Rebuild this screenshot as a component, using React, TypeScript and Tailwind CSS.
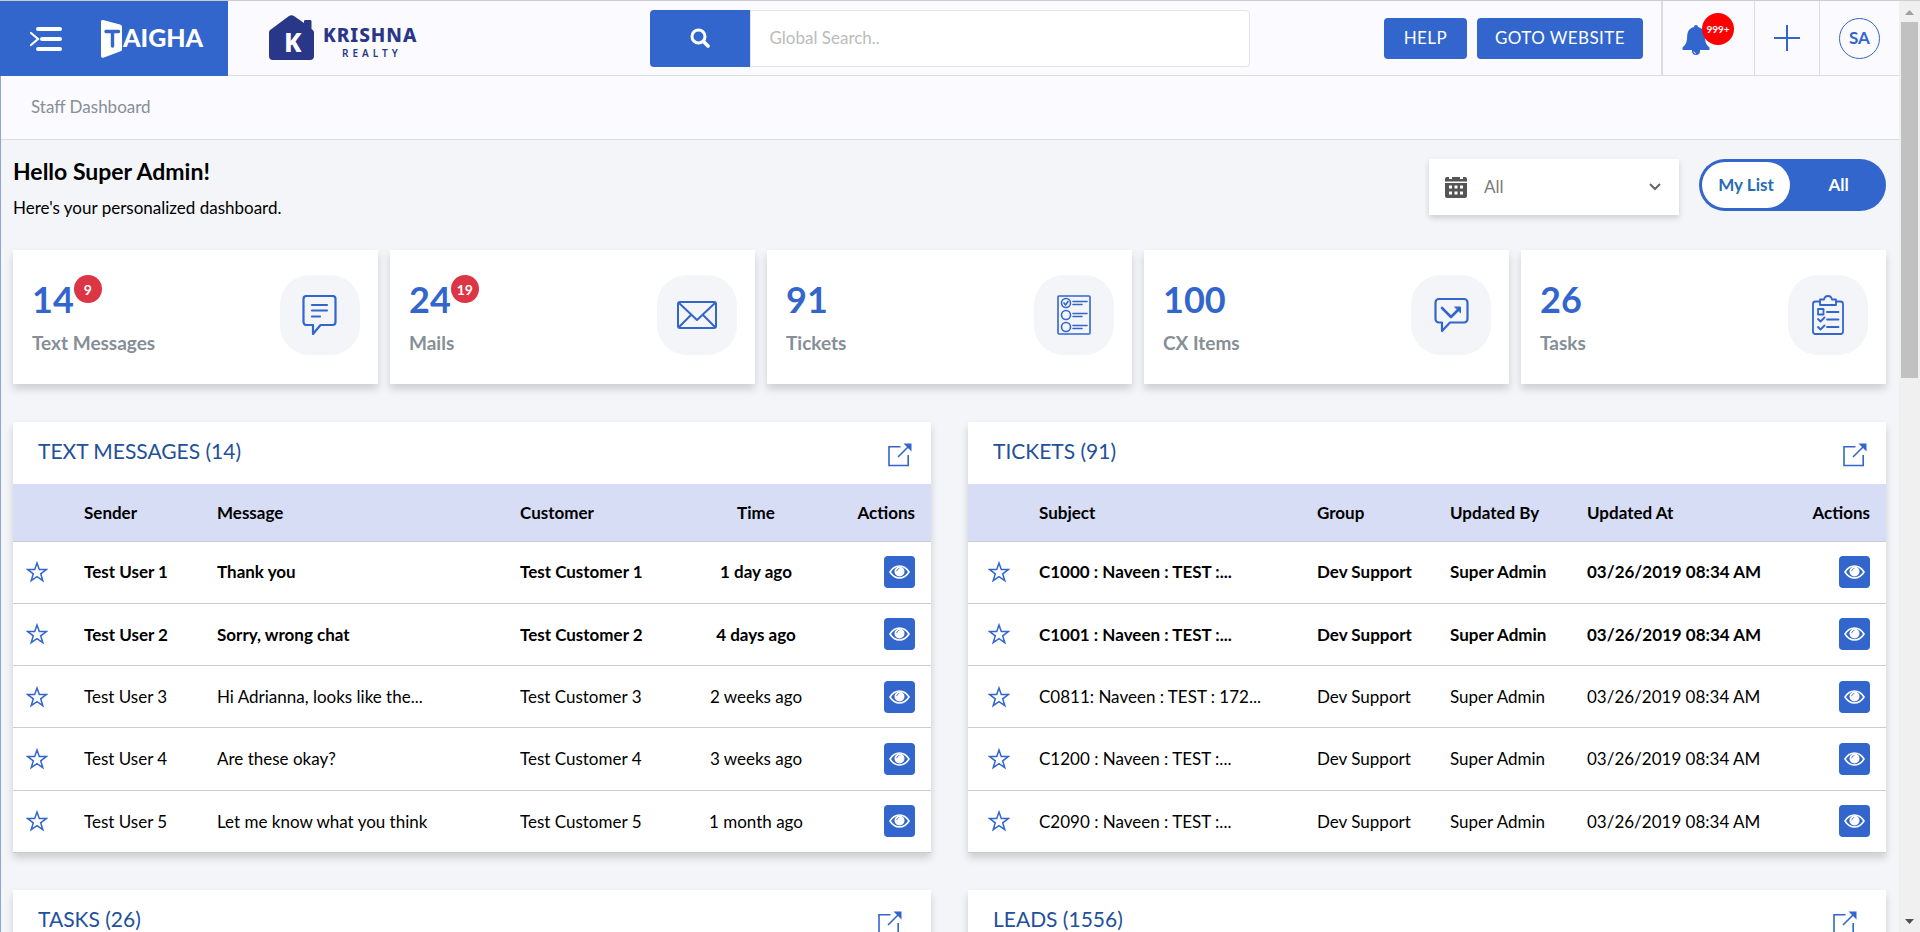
import { ReactNode } from "react";
import clsx from "clsx";

interface IStat {
  label: string;
  value: number;
  badge?: number;
  icon: ReactNode;
}

interface IColumn {
  title: string;
  width: string;
  align?: string;
}

interface IRow {
  unread: boolean;
  cells: string[];
}

interface PanelProps {
  title: string;
  columns?: IColumn[];
  rows?: IRow[];
  iconEdge?: string;
  starPadding?: string;
}

const stroke = {
  fill: "none",
  stroke: "currentColor",
  strokeWidth: 2,
  strokeLinejoin: "round" as const,
  strokeLinecap: "round" as const,
};

function MessageIcon() {
  return (
    <svg width="40" height="40" viewBox="0 0 40 40" {...stroke} strokeWidth={2.2}>
      <path d="M6.500 1h26a3 3 0 0 1 3 3v23a3 3 0 0 1-3 3H20.500l-7.500 9v-9H6.500a3 3 0 0 1-3-3V4a3 3 0 0 1 3-3z" />
      <path d="M12 10h15M12 15.500h15M12 21.500h8" />
    </svg>
  );
}

function MailIcon() {
  return (
    <svg width="40" height="40" viewBox="0 0 40 40" {...stroke}>
      <rect x="1" y="7" width="38" height="26" rx="2" />
      <path d="M2 8l18 17L38 8M2 32l12-12M38 32L26 20" />
    </svg>
  );
}

function TicketIcon() {
  return (
    <svg width="40" height="40" viewBox="0 0 40 40" {...stroke} strokeWidth={1.6}>
      <rect x="4" y="1" width="32" height="38" rx="1" />
      <circle cx="12" cy="8" r="4.500" />
      <circle cx="12" cy="20" r="4.500" />
      <circle cx="12" cy="32" r="4.500" />
      <path d="M10 8l1.500 2L14 6.500M19 6.500h14M19 9.500h9M19 18.500h14M19 21.500h9M19 30.500h14M19 33.500h9" />
    </svg>
  );
}

function CxIcon() {
  return (
    <svg width="40" height="40" viewBox="0 0 40 40" {...stroke} strokeWidth={2.2}>
      <path d="M8 4h25a3.500 3.500 0 0 1 3.500 3.500V24a3.500 3.500 0 0 1-3.500 3.500H19L11 36v-8.500H8A3.500 3.500 0 0 1 4.500 24V7.500A3.500 3.500 0 0 1 8 4z" />
      <path d="M11 13l9 9 8-8" strokeWidth={2.6} />
      <path d="M24 12h5.500v5.500z" fill="currentColor" strokeWidth={1} />
    </svg>
  );
}

function TaskIcon() {
  return (
    <svg width="40" height="40" viewBox="0 0 40 40" {...stroke} strokeWidth={1.8}>
      <path d="M12 6.500H7.500a2.500 2.500 0 0 0-2.500 2.500v27.500A2.500 2.500 0 0 0 7.500 39h25a2.500 2.500 0 0 0 2.500-2.500V9a2.500 2.500 0 0 0-2.500-2.500H28" />
      <path d="M12 10V4.500h4C16.500 2 18 1 20 1s3.500 1 4 3.500h4V10z" />
      <path d="M10 14h5.500v5.500H10zM19 17h11.500M19 24.500h11.500M19 32h11.500M10 24l2.500 2.500 4-4M10 32l2.500 2.500 4-4" />
    </svg>
  );
}

function ExternalIcon() {
  return (
    <svg width="24" height="24" viewBox="0 0 24 24" fill="none" stroke="currentColor" strokeWidth="1.600">
      <path d="M12.500 3.800H1v18.700h19.200V12" />
      <path d="M10 14L22 2" />
      <path d="M15.500 0.500H23.500v8z" fill="currentColor" stroke="none" />
    </svg>
  );
}

function StarIcon() {
  return (
    <svg width="22" height="22" viewBox="0 0 22 22" fill="none" stroke="currentColor" strokeWidth="1.500">
      <path d="M11 2l2.300 6.500h7l-5.600 4.300 2.100 6.900L11 15.700l-5.800 4 2.100-6.900L1.700 8.500h7z" />
    </svg>
  );
}

function EyeIcon() {
  return (
    <svg width="21" height="14" viewBox="0 0 21 14" fill="none">
      <path d="M1 7C3.500 3 6.700 1 10.500 1S17.500 3 20 7c-2.500 4-5.700 6-9.500 6S3.500 11 1 7z" stroke="white" strokeWidth="1.600" />
      <circle cx="10.500" cy="6.500" r="5" fill="white" />
      <path d="M7.800 6.200c0-1.500 1-2.600 2.500-2.700" stroke="#3266cc" strokeWidth="0.900" />
    </svg>
  );
}

function MenuIcon() {
  return (
    <svg width="34" height="26" viewBox="0 0 34 26" fill="none" stroke="white" strokeLinecap="round">
      <path d="M9 3h22M13 13h18M9 23h22" strokeWidth="4" />
      <path d="M2 7l7 6-7 6" strokeWidth="2.200" />
    </svg>
  );
}

function BellIcon() {
  return (
    <svg width="28" height="32" viewBox="0 0 28 32" fill="#3266cc">
      <path d="M14 1c1.200 0 2 .8 2 2 4.500 1 6.500 4.300 6.800 9 .3 5.500 1 8.500 4.700 11.500v2.500H.5v-2.500C4.200 20.500 5 17.500 5.200 12c.3-4.700 2.300-8 6.800-9 0-1.200.8-2 2-2z" />
      <path d="M10 26h8v1a4 4 0 0 1-8 0z" />
      <path d="M11.800 27.500a2.200 2.200 0 0 0 2 2" fill="none" stroke="white" strokeWidth="0.900" />
    </svg>
  );
}

function CalendarIcon() {
  return (
    <svg width="22" height="22" viewBox="0 0 22 22">
      <path fill="#555" d="M2 1h2v2h3V1h8v2h3V1h2a2 2 0 0 1 2 2v2.500H0V3a2 2 0 0 1 2-2zM0 7h22v13a2 2 0 0 1-2 2H2a2 2 0 0 1-2-2z" />
      <path fill="white" d="M4 9.500h3v3H4zM9.500 9.500h3v3h-3zM15 9.500h3v3h-3zM4 15.500h3v3H4zM9.500 15.500h3v3h-3zM15 15.500h3v3h-3z" />
    </svg>
  );
}

function TaighaLogo() {
  return (
    <svg width="108" height="40" viewBox="0 0 108 40" role="img" aria-label="Taigha">
      <path fill="white" d="M3 1l17 4.500c1.500.5 2 1 2 2.500v22c0 1.500-.5 2-2 2.500L4 38.500C2 39 1 38.500 1 37V3c0-1.500.5-2.300 2-2z" />
      <path fill="none" stroke="#3266cc" strokeWidth="3.400" strokeLinecap="round" d="M6 12.500h12.500M12.500 13v14" />
      <text x="23" y="28" fill="white" className="font-[Lato] text-[25px] font-black">
        AIGHA
      </text>
    </svg>
  );
}

function KrishnaLogo() {
  return (
    <svg width="152" height="46" viewBox="0 0 152 46" role="img" aria-label="Krishna Realty" fill="#293789">
      <path d="M20 1c1.500-1 3.500-1 5 0l10 7V6.500C35 5.500 35.500 5 36.500 5h4.500c1 0 1.500.5 1.500 1.500V14l1 .8c1.200 1 1.500 1.800 1.500 3.200v23a4 4 0 0 1-4 4H4a4 4 0 0 1-4-4V18c0-1.500.5-2.500 1.500-3.200z" />
      <text x="15" y="37" fill="white" className="font-['Noto_Sans'] text-[26px] font-extrabold">
        K
      </text>
      <text x="54" y="27" className="font-['Noto_Sans'] text-[19px] font-extrabold tracking-wider">
        KRISHNA
      </text>
      <text x="73" y="42" className="font-['Noto_Sans'] text-[10px] font-semibold tracking-[4px]">
        REALTY
      </text>
    </svg>
  );
}

const stats: IStat[] = [
  { label: "Text Messages", value: 14, badge: 9, icon: <MessageIcon /> },
  { label: "Mails", value: 24, badge: 19, icon: <MailIcon /> },
  { label: "Tickets", value: 91, icon: <TicketIcon /> },
  { label: "CX Items", value: 100, icon: <CxIcon /> },
  { label: "Tasks", value: 26, icon: <TaskIcon /> },
];

const messageColumns: IColumn[] = [
  { title: "Sender", width: "w-[133px]" },
  { title: "Message", width: "" },
  { title: "Customer", width: "w-[160px]" },
  { title: "Time", width: "w-[152px]", align: "text-center" },
];

const messages: IRow[] = [
  { unread: true, cells: ["Test User 1", "Thank you", "Test Customer 1", "1 day ago"] },
  { unread: true, cells: ["Test User 2", "Sorry, wrong chat", "Test Customer 2", "4 days ago"] },
  { unread: false, cells: ["Test User 3", "Hi Adrianna, looks like the...", "Test Customer 3", "2 weeks ago"] },
  { unread: false, cells: ["Test User 4", "Are these okay?", "Test Customer 4", "3 weeks ago"] },
  { unread: false, cells: ["Test User 5", "Let me know what you think", "Test Customer 5", "1 month ago"] },
];

const ticketColumns: IColumn[] = [
  { title: "Subject", width: "" },
  { title: "Group", width: "w-[133px]" },
  { title: "Updated By", width: "w-[137px]" },
  { title: "Updated At", width: "w-[200px]" },
];

const tickets: IRow[] = [
  { unread: true, cells: ["C1000 : Naveen : TEST :...", "Dev Support", "Super Admin", "03/26/2019 08:34 AM"] },
  { unread: true, cells: ["C1001 : Naveen : TEST :...", "Dev Support", "Super Admin", "03/26/2019 08:34 AM"] },
  { unread: false, cells: ["C0811: Naveen : TEST : 172...", "Dev Support", "Super Admin", "03/26/2019 08:34 AM"] },
  { unread: false, cells: ["C1200 : Naveen : TEST :...", "Dev Support", "Super Admin", "03/26/2019 08:34 AM"] },
  { unread: false, cells: ["C2090 : Naveen : TEST :...", "Dev Support", "Super Admin", "03/26/2019 08:34 AM"] },
];

function StatCard({ stat }: { stat: IStat }) {
  return (
    <div className="flex h-[134px] items-start justify-between bg-white pt-[25px] pr-[18px] pl-[19px] shadow-[0_5px_8px_rgba(0,0,0,0.16)]">
      <div>
        <div className="flex items-start">
          <span className="text-[36px] leading-[48px] font-bold text-[#3266cc]">{stat.value}</span>
          {stat.badge && (
            <span className="flex h-7 min-w-7 items-center justify-center rounded-full bg-[#dc3545] px-1 text-[14px] font-bold text-white">
              {stat.badge}
            </span>
          )}
        </div>
        <p className="text-[19px] leading-[40px] font-bold text-[#868e96]">{stat.label}</p>
      </div>
      <div className="flex h-20 w-20 items-center justify-center rounded-[30px] bg-[#f3f5f9] text-[#3266cc]">
        {stat.icon}
      </div>
    </div>
  );
}

function Panel({ title, columns, rows = [], iconEdge = "pr-[19px]", starPadding = "pl-[13px]" }: PanelProps) {
  return (
    <section className="min-w-0 bg-white shadow-[0_5px_8px_rgba(0,0,0,0.16)]">
      <div className={clsx("flex h-[62px] items-center justify-between pl-[25px]", iconEdge)}>
        <h2 className="pb-1 text-[21px] leading-6 text-[#23509b]">{title}</h2>
        <a href="#" aria-label={`Open ${title}`} className="pt-1 text-[#3266cc]">
          <ExternalIcon />
        </a>
      </div>
      {columns && (
        <table className="h-[369px] w-full table-fixed text-left">
          <thead className="bg-[#d6ddf5]">
            <tr className="h-[57px] border-b border-[#ccc]">
              <th className="w-[71px]"></th>
              {columns.map((column) => (
                <th key={column.title} className={clsx("font-bold", column.width, column.align)}>
                  {column.title}
                </th>
              ))}
              <th className="w-[99px] pr-4 text-right font-bold">Actions</th>
            </tr>
          </thead>
          <tbody>
            {rows.map((row) => (
              <tr key={row.cells[0]} className={clsx("border-b border-[#ccc]", row.unread && "font-bold")}>
                <td className={starPadding}>
                  <button type="button" aria-label="Star" className="block text-[#3266cc]">
                    <StarIcon />
                  </button>
                </td>
                {row.cells.map((cell, i) => (
                  <td key={i} className={clsx("truncate", columns[i].align)}>
                    {cell}
                  </td>
                ))}
                <td className="pr-4">
                  <button
                    type="button"
                    aria-label="View"
                    className="ml-auto flex h-8 w-[31px] items-center justify-center rounded bg-[#3266cc]"
                  >
                    <EyeIcon />
                  </button>
                </td>
              </tr>
            ))}
          </tbody>
        </table>
      )}
      {!columns && <div className="h-[369px]" />}
    </section>
  );
}

function Header() {
  return (
    <header className="flex h-[76px] items-stretch border-t border-[#ccc] bg-[#fbfaff]">
      <div className="flex w-[228px] items-center bg-[#3266cc] pl-[29px]">
        <button type="button" aria-label="Toggle menu">
          <MenuIcon />
        </button>
        <a href="#" className="ml-[37px]">
          <TaighaLogo />
        </a>
      </div>
      <div className="flex flex-1 items-stretch border-b border-[#dcdde2]">
        <a href="#" className="self-center pl-[41px]">
          <KrishnaLogo />
        </a>
        <div className="flex flex-1 items-center justify-center pl-24">
          <form className="flex h-[57px] w-[600px]">
            <button type="button" aria-label="Search" className="flex w-[100px] items-center justify-center rounded-l bg-[#3266cc]">
              <svg width="20" height="20" viewBox="0 0 20 20" fill="none" stroke="white" strokeLinecap="round">
                <circle cx="8.500" cy="8.500" r="6.500" strokeWidth="3" />
                <path d="M13.500 13.500l4.500 4.500" strokeWidth="3.600" />
              </svg>
            </button>
            <input
              type="text"
              aria-label="Global Search"
              placeholder="Global Search.."
              className="min-w-0 flex-1 rounded-r border border-[#e4e4e8] bg-white px-[18px] placeholder:text-[#bbb]"
            />
          </form>
        </div>
        <div className="flex items-center gap-[10px] pr-[18px] tracking-wide text-white">
          <button type="button" className="h-[41px] min-w-[83px] rounded bg-[#3266cc] px-[18px]">
            HELP
          </button>
          <button type="button" className="h-[41px] rounded bg-[#3266cc] px-[18px]">
            GOTO WEBSITE
          </button>
        </div>
        <div className="flex w-[93px] items-center border-l-2 border-[#dcdde2] pl-[19px]">
          <button type="button" aria-label="Notifications" className="relative pt-1">
            <BellIcon />
            <span className="absolute -top-[7px] left-5 flex h-8 w-8 items-center justify-center rounded-full bg-[#f00] text-[10px] font-bold text-white">
              999+
            </span>
          </button>
        </div>
        <button type="button" aria-label="Add" className="flex w-[65px] items-center justify-center border-l border-[#dcdde2]">
          <svg width="26" height="26" viewBox="0 0 26 26" stroke="#3266cc" strokeWidth="2">
            <path d="M13 0v26M0 13h26" />
          </svg>
        </button>
        <div className="flex w-20 items-center justify-center border-l border-[#dcdde2]">
          <button type="button" className="h-[41px] w-[41px] rounded-full border border-[#3266cc] text-[17px] font-bold text-[#3266cc]">
            SA
          </button>
        </div>
      </div>
    </header>
  );
}

function Scrollbar() {
  return (
    <div aria-hidden="true" className="flex w-[21px] shrink-0 flex-col items-center border-t border-[#ccc] bg-[#f0f0f0]">
      <svg width="21" height="21" viewBox="0 0 21 21" className="shrink-0">
        <path d="M6 14l4.500-5 4.500 5z" fill="#a0a0a0" />
      </svg>
      <div className="h-[356px] w-[17px] shrink-0 bg-[#c1c1c1]" />
      <svg width="21" height="21" viewBox="0 0 21 21" className="mt-auto shrink-0">
        <path d="M6 8h9l-4.500 5z" fill="#505050" />
      </svg>
    </div>
  );
}

export default function App() {
  return (
    <div className="flex h-screen overflow-hidden bg-[#f3f5f9] font-[Lato,sans-serif] text-[17px] text-black">
      <div className="min-w-0 flex-1">
        <Header />
        <div className="border-l border-[#8fa5d3]">
          <nav className="flex h-16 items-center border-b border-[#d9dbe0] bg-[#fbfaff] pb-[2px] pl-[30px] text-[#868e96]">
            Staff Dashboard
          </nav>
          <main className="pr-[13px] pl-3">
            <div className="flex items-start justify-between pt-[19px]">
              <div>
                <h1 className="text-[23px] leading-6 font-bold">Hello Super Admin!</h1>
                <p className="mt-3 leading-[26px]">Here&apos;s your personalized dashboard.</p>
              </div>
              <div className="flex items-start gap-5">
                <label className="flex h-14 w-[250px] items-center bg-white pl-4 shadow-[0_3px_6px_rgba(0,0,0,0.16)]">
                  <CalendarIcon />
                  <select aria-label="Period" className="ml-[17px] flex-1 appearance-none text-[#7a7a7a]">
                    <option>All</option>
                  </select>
                  <svg width="12" height="8" viewBox="0 0 12 8" fill="none" stroke="#666" strokeWidth="2" className="mr-[18px]">
                    <path d="M1 1l5 5 5-5" />
                  </svg>
                </label>
                <div className="flex h-[52px] w-[187px] rounded-full bg-[#3266cc] p-[3px] font-bold">
                  <button type="button" className="w-[88px] rounded-full bg-white text-[#266cb3]">
                    My List
                  </button>
                  <button type="button" className="flex-1 pl-1 text-white">
                    All
                  </button>
                </div>
              </div>
            </div>
            <div className="mt-[29px] grid grid-cols-5 gap-3">
              {stats.map((stat) => (
                <StatCard key={stat.label} stat={stat} />
              ))}
            </div>
            <div className="mt-[38px] grid grid-cols-2 gap-x-[37px] gap-y-[37px]">
              <Panel title="TEXT MESSAGES (14)" columns={messageColumns} rows={messages} />
              <Panel title="TICKETS (91)" columns={ticketColumns} rows={tickets} starPadding="pl-5" />
              <Panel title="TASKS (26)" iconEdge="pr-[29px]" />
              <Panel title="LEADS (1556)" iconEdge="pr-[29px]" />
            </div>
          </main>
        </div>
      </div>
      <Scrollbar />
    </div>
  );
}
